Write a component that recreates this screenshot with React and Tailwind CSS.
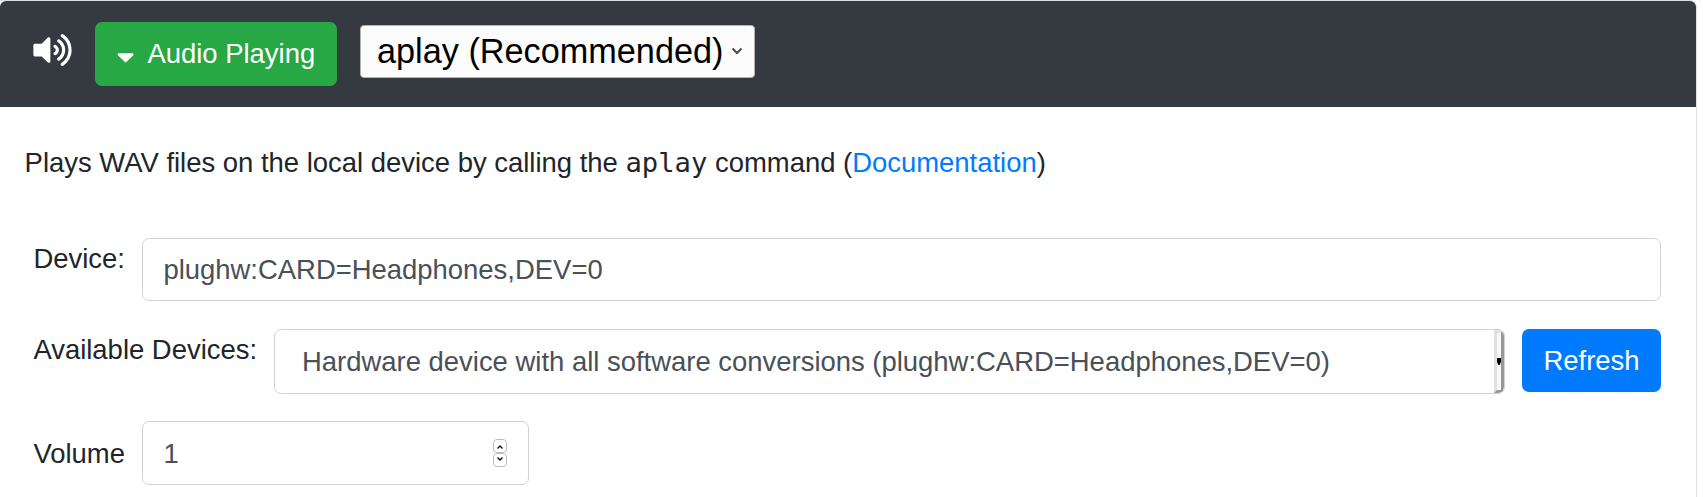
import { FaCaretDown, FaVolumeUp } from "react-icons/fa";

function Header() {
  return (
    <header className="flex h-[106px] items-start rounded-t-[6px] bg-[#343a40] pl-[33px]">
      <FaVolumeUp className="mt-[32px] h-[34px] w-[39px] shrink-0 text-white" />
      <button className="ml-[23px] mt-[21px] flex h-[64px] w-[242px] items-center rounded-[7px] bg-[#28a745] pl-[21.500px] text-white">
        <FaCaretDown className="mt-[6px] h-[27.500px] w-[17.200px] shrink-0" />
        <span className="ml-[13.700px] whitespace-nowrap">Audio Playing</span>
      </button>
      <div className="ml-[23px] mt-[24px] flex h-[53px] w-[395px] items-center rounded-[4px] border border-[#b4b4b4] bg-[#fcfcfc] pb-[2px] pl-[16px] text-black">
        <span className="whitespace-nowrap text-[34.25px] leading-[50px]">aplay (Recommended)</span>
        <svg viewBox="0 0 12 8" className="ml-[8px] h-[8px] w-[12px] shrink-0" fill="none" stroke="#4a4a4a" strokeWidth="2">
          <path d="M1.500 1.500 6 6l4.500-4.500" />
        </svg>
      </div>
    </header>
  );
}

function DeviceRow() {
  return (
    <div className="flex items-start">
      <label className="w-[109px] pl-[0.4px] pt-[1px]">Device:</label>
      <div className="flex h-[63px] flex-1 items-center rounded-[7px] border border-[#ced4da] px-[20.400px] text-[#495057]">
        plughw:CARD=Headphones,DEV=0
      </div>
    </div>
  );
}

function AvailableDevicesRow() {
  return (
    <div className="mt-[28px] flex items-start">
      <label className="w-[241px] whitespace-nowrap pl-[0.4px] pt-[1px]">Available Devices:</label>
      <div className="flex h-[65px] flex-1 overflow-hidden rounded-[7px] border border-[#ced4da] text-[#495057]">
        <span className="flex-1 pl-[27px] leading-[63px]">
          Hardware device with all software conversions (plughw:CARD=Headphones,DEV=0)
        </span>
        <div className="flex h-[63px] w-[10px] items-center justify-center border-[3px] border-b-[#979797] border-l-[#e0e0e0] border-r-[#979797] border-t-[#e0e0e0] bg-[#f8f8f8]">
          <svg viewBox="0 0 4 7" className="h-[7px] w-[4px] shrink-0">
            <path d="M0 0h4v4L2.600 7H1.400L0 4z" fill="#000" />
          </svg>
        </div>
      </div>
      <button className="ml-[17px] h-[63px] w-[139px] rounded-[7px] bg-[#007bff] text-white">Refresh</button>
    </div>
  );
}

function StepButton({ d, shift }) {
  return (
    <div className={`flex h-[14px] w-[14px] items-center justify-center rounded-[4px] border border-[#bdbdbd] ${shift}`}>
      <svg viewBox="0 0 6 4" className="h-[4px] w-[6px]" fill="none" stroke="#111" strokeWidth="1.4">
        <path d={d} />
      </svg>
    </div>
  );
}

function VolumeRow() {
  return (
    <div className="mt-[27px] flex items-center">
      <label className="w-[109px] pl-[0.4px] pt-[2px]">Volume</label>
      <div className="flex h-[64px] w-[387px] items-center justify-between rounded-[7px] border border-[#ced4da] pl-[20.400px] pr-[21px] text-[#495057]">
        <span className="pt-[2px]">1</span>
        <div className="flex flex-col">
          <StepButton d="M0.500 3.500 3 1l2.500 2.500" shift="pt-[2px]" />
          <StepButton d="M0.500 0.500 3 3l2.500-2.500" shift="pb-[2px]" />
        </div>
      </div>
    </div>
  );
}

export default function App() {
  return (
    <div className="h-[497px] w-[1703px] overflow-hidden bg-white font-['Liberation_Sans',Arial,sans-serif] text-[27.45px] leading-[40px] text-[#212529]">
      <div className="h-[520px] w-[1697px] rounded-tr-[7px] border-r border-t border-[#dfdfdf]">
        <Header />
        <p className="pl-[24.600px] pt-[36px]">
          Plays WAV files on the local device by calling the{" "}
          <span className="font-['DejaVu_Sans_Mono',monospace] text-[27.2px]">aplay</span> command (
          <a className="text-[#007bff]">Documentation</a>)
        </p>
        <div className="mt-[55px] pl-[33px] pr-[35px]">
          <DeviceRow />
          <AvailableDevicesRow />
          <VolumeRow />
        </div>
      </div>
    </div>
  );
}
